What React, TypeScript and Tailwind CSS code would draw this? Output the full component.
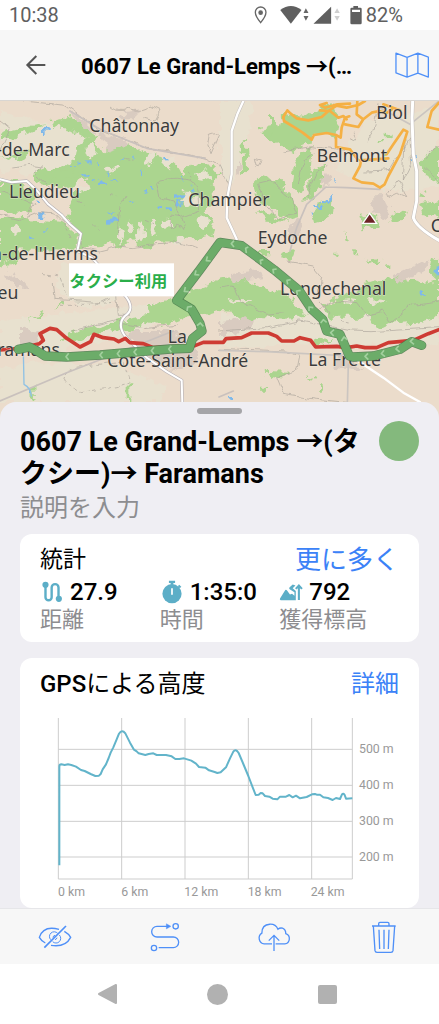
import React from "react";

const mapLabels: { text: string; x: number; y: number; anchor?: "start" | "end" }[] = [
  { text: "Châtonnay", x: 268, y: 92 },
  { text: "-de-Marc", x: 209, y: 166, anchor: "end" },
  { text: "Lieudieu", x: 27, y: 291 },
  { text: "Champier", x: 565, y: 314 },
  { text: "Biol", x: 1129, y: 53 },
  { text: "Belmont", x: 950, y: 184 },
  { text: "Eydoche", x: 773, y: 429 },
  { text: "n-de-l'Herms", x: 294, y: 476, anchor: "end" },
  { text: "C", x: 1292, y: 393 },
  { text: "eu", x: 55, y: 593, anchor: "end" },
  { text: "La", x: 503, y: 725 },
  { text: "ramans", x: 180, y: 764, anchor: "end" },
  { text: "Cote-Saint-André", x: 322, y: 799 },
  { text: "Longechenal", x: 840, y: 583 },
  { text: "La Frette", x: 925, y: 796 },
];

const forests = [
  "M0 95L60 80L118 66L130 76L70 100L30 112L0 118Z",
  "M90 218L180 200L225 170L232 130L262 108L310 150L345 120L385 125L425 150L480 165L520 200L560 218L562 185L640 192L660 215L632 245L645 290L620 330L645 380L640 405L590 412L540 420L475 422L430 440L395 408L365 440L330 420L300 442L235 438L242 395L200 350L222 300L215 270L272 268L262 235L190 262L90 238Z",
  "M0 350L110 356L185 362L238 402L228 440L130 450L0 446Z",
  "M0 238L62 246L110 275L100 320L60 332L0 330Z",
  "M155 60L215 48L262 82L300 112L280 122L230 92L160 78Z",
  "M100 212L160 214L240 210L238 228L140 234Z",
  "M0 170L60 160L90 145L80 168L30 180Z",
  "M850 38L925 50L960 20L1000 10L1020 60L1010 110L935 100L932 125L885 148L830 130L790 100L775 88L840 75Z",
  "M876 262L880 200L912 148L935 142L930 198L940 220L915 250L893 280Z",
  "M916 296L925 255L945 210L975 190L975 240L935 295Z",
  "M760 250L790 220L835 240L885 290L898 345L860 356L812 322L778 305Z",
  "M766 325L820 340L870 365L800 362Z",
  "M935 340L960 305L997 296L992 350L940 365Z",
  "M1265 180L1295 140L1317 128L1317 240L1275 222Z",
  "M1082 345L1107 332L1138 350L1132 382L1087 388Z",
  "M722 130L740 110L745 215L730 222Z",
  "M1170 345L1222 328L1215 350L1175 365Z",
  "M1260 310L1317 300L1317 348L1270 340Z",
  "M188 712L240 686L300 672L370 655L440 645L445 615L530 590L600 558L660 535L720 530L777 555L857 578L905 620L920 645L857 650L787 645L737 660L697 632L660 630L610 645L540 655L480 678L430 662L400 690L340 688L270 705L210 728Z",
  "M970 610L1030 580L1075 570L1087 550L1137 535L1197 530L1277 545L1317 535L1317 645L1257 665L1177 670L1147 685L1097 650L987 650Z",
  "M1300 460L1317 475L1317 540L1290 515Z",
  "M845 455L880 448L868 480L840 475Z",
  "M94 855L106 850L108 895L95 900Z",
  "M800 810L860 812L840 830L805 828Z",
  "M945 710L1000 715L970 735L940 728Z",
  "M0 430L70 440L50 480L0 500Z",
];

const fields = [
  "M0 30L110 60L220 80L280 130L230 260L110 240L60 200L0 210Z",
  "M0 660L180 640L330 620L460 610L520 660L300 720L120 760L0 740Z",
  "M0 800L150 780L330 790L500 850L480 906L0 906Z",
  "M1100 60L1230 40L1317 20L1317 260L1180 270L1050 230L1000 200Z",
  "M660 0L760 0L740 120L690 260L660 200Z",
  "M660 640L900 620L1100 650L1317 650L1317 730L1080 735L900 730L660 740Z",
  "M180 480L300 520L350 600L240 620L170 560Z",
];

const clearings = [
  [250, 268, 20, 10], [560, 290, 16, 26], [610, 225, 24, 14], [448, 172, 12, 18], [500, 368, 20, 12],
  [330, 205, 18, 8], [270, 150, 14, 22], [52, 384, 11, 11], [420, 395, 12, 30], [458, 385, 9, 26],
  [540, 418, 22, 10], [365, 404, 8, 20], [607, 365, 14, 22], [585, 300, 20, 12], [505, 178, 20, 14],
  [388, 372, 10, 22], [430, 640, 14, 6], [720, 600, 34, 6], [1050, 600, 20, 5], [1130, 600, 30, 5],
];

const towns = [
  "M210 30L240 45L290 95L370 115L390 130L330 150L300 100L245 78Z",
  "M1115 300L1145 270L1170 320L1160 352L1110 330Z",
  "M865 380L905 345L900 400L870 410Z",
  "M690 520L790 505L780 535L700 545Z",
  "M390 690L520 690L560 720L600 770L545 810L470 790L400 730Z",
  "M60 680L110 690L115 730L60 738Z",
  "M1010 760L1060 770L1090 810L1000 800Z",
  "M370 30L420 25L400 55L350 55Z",
  "M710 180L728 190L725 218L712 215Z",
  "M960 240L990 210L985 250L970 260Z",
  "M10 510L60 530L85 560L50 560Z",
  "M1190 520L1290 470L1280 500L1200 545Z",
  "M660 660L760 650L750 690L660 700Z",
];

const contours = [
  "M70 0L190 12L240 45L300 85L370 115L440 142L530 152L615 172L660 195",
  "M40 198L90 190L128 195L100 215L150 260L200 268",
  "M330 15Q350 35 385 25Q430 40 450 15L480 30L465 60L430 50",
  "M625 100Q650 90 655 100L630 158L620 130Z",
  "M470 245Q500 225 560 235Q600 240 595 330L540 350L520 300L480 290Z",
  "M515 345L545 350L555 385L530 370L510 380Z",
  "M0 340L60 355L115 332L160 335L200 375",
  "M0 275L60 290L105 310L80 345",
  "M240 400L245 440L300 450L360 435L400 440L470 428L540 425L590 440",
  "M350 410L360 310L375 285",
  "M660 190L690 255L690 290",
  "M850 150L935 137L1050 152",
  "M770 250L810 240L870 290L890 340L830 350L790 305Z",
  "M895 250L910 180L940 155",
  "M920 285L950 215L985 190",
  "M1137 10L1122 90L1100 125",
  "M1090 210L1140 208L1170 205L1230 110L1235 190L1210 240L1215 115",
  "M1165 280L1195 235L1220 290L1195 280L1170 292Z",
  "M1275 170L1317 130M1275 200L1317 240",
  "M160 540L165 595L240 600L300 605L330 590",
  "M350 585L355 640L390 640",
  "M220 690L350 655L360 670L430 680L480 675L530 670",
  "M660 560L700 555L720 600L800 640L850 635",
  "M657 690L800 680L900 660L1060 690L1110 692L1317 680",
  "M950 630L1010 600L1070 605L1100 645L1150 630L1170 665L1240 610L1317 600",
  "M657 742L860 750L900 760L890 810L830 830L850 880L950 895L1050 905",
  "M860 480L940 495L965 525L955 600L985 640",
  "M0 60L30 85L0 150",
  "M1050 110Q1080 130 1060 95",
  "M760 175L785 180L775 197L765 195Z",
];

const ponds = [
  [135, 75, 8, 18], [175, 130, 14, 8], [250, 220, 14, 7], [280, 235, 10, 6], [300, 238, 18, 8],
  [328, 215, 8, 10], [262, 175, 16, 6], [385, 296, 18, 7], [325, 328, 16, 8], [322, 350, 26, 12],
  [490, 168, 12, 7], [420, 212, 6, 14], [525, 280, 22, 12], [535, 300, 10, 16], [500, 322, 14, 8],
  [472, 315, 14, 6], [115, 338, 18, 7], [110, 300, 10, 6], [90, 412, 8, 10], [130, 378, 8, 6],
  [545, 225, 6, 14], [288, 190, 6, 5], [335, 240, 10, 5], [368, 170, 6, 6], [430, 270, 8, 5],
  [940, 312, 26, 6], [975, 300, 14, 6], [985, 280, 8, 22], [926, 332, 10, 6], [1003, 235, 5, 10],
  [1230, 172, 12, 5], [1262, 565, 10, 16], [1307, 500, 10, 20], [682, 885, 8, 10], [93, 870, 5, 8],
  [210, 195, 14, 5], [235, 182, 12, 5], [450, 258, 10, 5], [395, 168, 6, 5], [570, 260, 8, 8],
];

const taxiRoute =
  "M55 745L88 738L108 748L135 765L200 768L300 762L405 753L510 744L568 742L578 712L606 690L600 668L575 625L530 598L600 506L660 424L725 434L822 506L897 568L935 625L968 655L980 690L1020 700L1048 765L1060 768L1120 765L1200 745L1235 722L1265 733";

function MapView() {
  return (
    <svg
      viewBox="0 0 1317 954"
      preserveAspectRatio="xMidYMin slice"
      className="block h-full w-full"
      role="img"
      aria-label="Map"
    >
      <defs>
        <filter id="rough" x="-5%" y="-5%" width="110%" height="110%">
          <feTurbulence type="fractalNoise" baseFrequency="0.035" numOctaves="3" seed="4" result="n" />
          <feDisplacementMap in="SourceGraphic" in2="n" scale="38" xChannelSelector="R" yChannelSelector="G" />
        </filter>
        <filter id="wavy" x="-5%" y="-5%" width="110%" height="110%">
          <feTurbulence type="fractalNoise" baseFrequency="0.03" numOctaves="2" seed="9" result="n" />
          <feDisplacementMap in="SourceGraphic" in2="n" scale="22" xChannelSelector="R" yChannelSelector="G" />
        </filter>
      </defs>
      <rect width="1317" height="954" fill="#ebdccb" />
      <g filter="url(#rough)">
        {fields.map((d) => (
          <path key={d} d={d} fill="#e8e1cf" />
        ))}
        {forests.map((d) => (
          <path key={d} d={d} fill="#abd58f" />
        ))}
        {clearings.map(([x, y, rx, ry]) => (
          <ellipse key={`${x}-${y}`} cx={x} cy={y} rx={rx} ry={ry} fill="#e8e1cf" />
        ))}
        {towns.map((d) => (
          <path key={d} d={d} fill="#d9cbc0" />
        ))}
        {ponds.map(([x, y, w, h]) => (
          <rect key={`${x}-${y}`} x={x} y={y} width={w} height={h} fill="#7fb9ea" />
        ))}
        <path
          d="M1160 95h18v14h-18zM1130 120h22v10h-22zM1145 155h14v10h-14zM1000 455h16v8h-16zM1090 470l50 10l-10 12zM1160 490h14v14h-14zM920 820l24 12l-6 10zM960 850h8v22h-8zM780 860h24v12h-24zM810 45h12v50h-12zM1060 440l14 20h-14zM80 660l50 -28l-6 12zM383 850h8v50h-8zM780 450h30v10h-30zM160 625l30-20v10zM1265 270l12 20h-16zM1030 390l20 40h-8z"
          fill="#abd58f"
        />
      </g>
      <g filter="url(#wavy)" fill="none" stroke="#aca59b" strokeWidth="2">
        {contours.map((d) => (
          <path key={d} d={d} />
        ))}
        <path
          d="M190 840Q200 800 220 800L370 780L390 850L240 875ZM230 300l20 10m30 60l15 20m35-110l20 8m85 70l24 10m-260 10l14 30m350-200l10 24m-200-60l24 6m620 480l40 10M180 610h90l70-6M120 520l60 8l20 60"
          strokeDasharray="12 9"
        />
      </g>

      <g fill="none" strokeLinejoin="round" strokeLinecap="round">
        <path d="M657 888L700 870M0 900L200 815L420 730L520 690M210 30L300 85L440 142L615 172M978 258L1040 260L1140 265M978 258L920 310L890 380L870 450" stroke="#c9c1bd" strokeWidth="5" />
        <path d="M657 748L800 752L1050 765M1045 790L1042 906M1140 20L1230 70L1317 0" stroke="#cbc5c0" strokeWidth="5" />
        <path d="M70 750L72 850Q92 860 94 885" stroke="#8fc1e4" strokeWidth="4" />
        <path d="M0 235L35 244L80 240L110 268L145 310L185 342L210 370L243 398L232 450L275 470L330 530L380 590Q405 625 375 645Q350 670 375 705L440 770L500 812L545 838L547 906" stroke="#b9b3b5" strokeWidth="10" />
        <path d="M0 235L35 244L80 240L110 268L145 310L185 342L210 370L243 398L232 450L275 470L330 530L380 590Q405 625 375 645Q350 670 375 705L440 770L500 812L545 838L547 906" stroke="#fff" strokeWidth="6" />
        <path d="M730 0L712 40L695 90L695 220L682 290L680 350L710 415" stroke="#c2bdba" strokeWidth="10" />
        <path d="M730 0L712 40L695 90L695 220L682 290L680 350L710 415M1060 770L1150 830L1210 875L1260 903" stroke="#fff" strokeWidth="7" />
        <path d="M1238 0L1236 50L1240 160L1250 210L1250 300L1240 350Q1250 380 1317 418" stroke="#c2bdba" strokeWidth="12" />
        <path d="M1238 0L1236 50L1240 160L1250 210L1250 300L1240 350Q1250 380 1317 418" stroke="#fff" strokeWidth="9" />
        <g stroke="#f5b044" strokeWidth="8">
          <path d="M850 48L862 28L872 38L890 52L925 58L965 48L985 30L1010 14L1040 20L1075 12L1095 0" />
          <path d="M850 48L852 60L885 80L908 95L935 116L942 102L980 96L1008 102L1022 110L1025 80L1035 50L1048 46" />
          <path d="M960 28L990 30L1015 50L1030 45L1040 55M1072 0L1070 40L1090 55L1075 78L1035 70M1090 55L1115 35L1137 30L1160 36L1175 25" />
          <path d="M980 6L960 12L975 20L1012 10L1050 8M1008 110L1008 138L1050 145L1072 175M1082 185L1080 195L1060 232L1085 244L1120 248L1140 260L1154 250L1165 225L1200 160L1222 92L1210 86L1180 130L1160 160" />
          <path d="M1150 10L1200 28M1317 5L1295 30L1282 78L1317 86M1080 178L1165 172" />
        </g>
        <path
          d="M0 747L60 742L118 728L130 718L120 698L150 682L170 686L200 712L240 738L272 722L282 700L310 710L342 714L356 722L376 712L390 725L430 728L460 740L585 734L610 724L670 724L678 713L725 710L755 696L805 696L830 706L845 720L882 720L900 710L932 718L947 738L1010 736L1040 740L1070 735L1095 740L1130 740L1165 725L1240 718L1285 698L1317 686"
          stroke="#ce3b33"
          strokeWidth="11"
        />
      </g>

      <path d="M1088 367L1109 337L1130 367Z" fill="#6b2426" stroke="#fff" strokeWidth="4" />

      <g
        className="[font-family:'Noto_Sans',sans-serif]"
        fontSize="53"
        fill="#3b3b3b"
        stroke="#f2ebdf"
        strokeWidth="3"
        strokeOpacity="0.7"
        paintOrder="stroke"
      >
        {mapLabels.map((l) => (
          <text key={l.text} x={l.x} y={l.y} textAnchor={l.anchor ?? "start"}>
            {l.text}
          </text>
        ))}
      </g>

      <g fill="none" strokeLinejoin="round" strokeLinecap="round">
        <path d={taxiRoute} stroke="#47794a" strokeOpacity="0.85" strokeWidth="28" />
        <path d={taxiRoute} stroke="#6cac69" strokeWidth="24" />
        <g stroke="#a3d09e" strokeWidth="5" strokeLinecap="butt">
          <path d="M206 757l-8 10l8 10M308 752l-8 10l8 10M360 748l-8 10l8 10M410 743l-8 10l8 10M462 739l-8 10l8 10M514 734l-8 10l8 10" />
          <path d="M610 676l-9-10l-10 8M576 616l-13 2l-2 12M556 558l-3 13l13 1M588 508l-3 13l13 1M622 466l-3 13l13 1M702 419l-8 9l8 10" />
          <path d="M745 438l-8 4l2 14M790 476l-9 2l2 12M830 504l-11 2l2 12M872 536l-11 2l2 12M902 568l-12 2l2 12M940 620l-13-2l0 12M980 664l-10-8l-8 10M1002 686l-10 9l9 10M1042 716l-10-8l-8 12M1104 757l-9 9l10 10M1152 748l-8 10l11 9M1196 734l-8 10l11 9M1240 712l-9 9l11 9" />
        </g>
      </g>

      <rect x="207" y="487" width="315" height="99" fill="#fff" />
      <text
        x="208"
        y="558"
        fontSize="49"
        fill="#2aae4a"
        className="font-bold [font-family:'Noto_Sans_CJK_JP',sans-serif]"
      >
        タクシー利用
      </text>
    </svg>
  );
}

function ElevationChart() {
  return (
    <svg viewBox="120 180 1077 570" className="block w-full" role="img" aria-label="GPSによる高度">
      <g stroke="#cdcdcd" strokeWidth="3" fill="none">
        <path d="M175 204V687M365 204V687M555 204V687M745 204V687M935 204V687M1057 204V687" />
        <path d="M175 298H1057M175 406H1057M175 514H1057M175 621H1057M175 687H1057" />
      </g>
      <path
        d="M178 646V350Q178 343 184 343L194 345L204 343L214 345L228 350L243 360L254 363L272 372L286 378L297 377L302 372L308 358L318 343L326 324L332 308L340 292L350 268L357 251Q366 237 376 250L390 278L402 299L410 304L416 310L436 315L446 312L460 310L470 315L498 315L515 319L526 327L538 327L552 325L574 332L588 341L597 351L616 353L627 361L644 366L652 369L662 367L678 352L690 325L700 305Q707 295 716 309L730 342L745 378L758 412L767 435L776 434L782 429L788 430L795 438L808 440L818 446L832 448L840 440L858 440L868 435L878 442L888 437L900 445L920 441L936 433L945 432L950 434L960 434L970 442L984 444L998 450L1008 444L1020 447L1026 433Q1030 428 1034 435L1038 446L1057 445"
        fill="none"
        stroke="#62b4ca"
        strokeWidth="6"
        strokeLinejoin="round"
      />
      <g fontSize="37" fill="#999" className="[font-family:Roboto,sans-serif]">
        <text x="1077" y="309">500 m</text>
        <text x="1077" y="417">400 m</text>
        <text x="1077" y="524">300 m</text>
        <text x="1077" y="632">200 m</text>
        <text x="174" y="738">0 km</text>
        <text x="364" y="738">6 km</text>
        <text x="553" y="738">12 km</text>
        <text x="743" y="738">18 km</text>
        <text x="932" y="738">24 km</text>
      </g>
    </svg>
  );
}

const stats = [
  {
    value: "27.9",
    label: "距離",
    icon: (
      <svg viewBox="124 150 66 70" className="h-6 w-6 shrink-0">
        <path d="M138 166V200A9 9 0 0 0 156 200V172A10 10 0 0 1 176 172V204" fill="none" stroke="#5caec7" strokeWidth="7" />
        <circle cx="138" cy="164" r="9" fill="#5caec7" />
        <circle cx="177" cy="205" r="9" fill="#5caec7" />
      </svg>
    ),
  },
  {
    value: "1:35:0",
    label: "時間",
    icon: (
      <svg viewBox="485 148 66 70" className="h-6 w-6 shrink-0">
        <circle cx="518" cy="188" r="28" fill="#5caec7" />
        <path d="M509 150h18v7h-18zM514 156h8v6h-8z" fill="#5caec7" />
        <path d="M537 164l6 6" stroke="#5caec7" strokeWidth="6" />
        <path d="M518 174v15" stroke="#fff" strokeWidth="5" strokeLinecap="round" />
      </svg>
    ),
  },
  {
    value: "792",
    label: "獲得標高",
    icon: (
      <svg viewBox="845 150 68 70" className="h-6 w-6 shrink-0">
        <path
          d="M849 209Q845 208 847 204L861 181Q864 176 868 181L876 192L882 190L889 196V186L875 177Q872 174 875 171L884 163L892 166L884 174L893 182V209Z"
          fill="#5caec7"
        />
        <path d="M902 208V168M893 176l9-10l9 10" fill="none" stroke="#5caec7" strokeWidth="6" />
      </svg>
    ),
  },
];

export default function App() {
  return (
    <div className="flex min-h-screen flex-col bg-white text-black [font-family:Roboto,'Noto_Sans_CJK_JP',sans-serif]">
      <div className="flex h-[30px] items-center justify-between pr-9 pl-[9px] text-xl leading-[30px] text-[#606060]">
        <span>10:38</span>
        <div className="flex items-center">
          <svg viewBox="750 15 340 60" className="h-5 w-[113px]" aria-hidden="true">
            <path d="M773 68Q757 49 757 37A16 16 0 0 1 789 37Q789 49 773 68Z" fill="none" stroke="#666" strokeWidth="4" />
            <circle cx="773" cy="38" r="7" fill="#666" />
            <path d="M832 30Q864 6 896 30L864 71Z" fill="#5f5f5f" />
            <path d="M902 39L909 25L917 39ZM902 48L909 62L917 48Z" fill="#666" />
            <path d="M932 71L985 20V71Z" fill="#5f5f5f" />
            <path d="M995 39L1003 25L1011 39ZM995 48L1003 62L1011 48Z" fill="#cfcfcf" />
            <path d="M1052 18h14v5h7q4 0 4 4v42q0 4-4 4h-26q-4 0-4-4V27q0-4 4-4h5zM1048 29v7h24v-7z" fill="#5f5f5f" fillRule="evenodd" />
          </svg>
          <span>82%</span>
        </div>
      </div>

      <header className="flex h-[70px] items-center bg-[#f7f7f7] pr-[9px] pl-[25px]">
        <button type="button" aria-label="戻る" className="shrink-0">
          <svg viewBox="74 163 66 66" className="h-[22px] w-[22px]">
            <path d="M135 196H82M108 169L81 196L108 223" fill="none" stroke="#555" strokeWidth="6" />
          </svg>
        </button>
        <h1 className="ml-[34px] min-w-0 flex-1 truncate pt-1 text-[22px] leading-8 font-bold">
          0607 Le Grand-Lemps →(…
        </h1>
        <button type="button" aria-label="地図" className="ml-4 shrink-0">
          <svg viewBox="1181 151 110 90" className="h-[30px] w-9">
            <path
              d="M1187 160L1221 173L1254 160L1286 172V233L1254 221L1221 233L1187 220ZM1221 173V233M1254 160V221"
              fill="none"
              stroke="#4f90f8"
              strokeWidth="4"
              strokeLinejoin="round"
            />
          </svg>
        </button>
      </header>

      <section className="h-[318px] overflow-hidden border-t border-[#d9d6d2]">
        <MapView />
      </section>

      <main className="relative -mt-4 flex-1 rounded-t-2xl bg-[#efeef3] px-5 pt-[6px]">
        <div className="mx-auto h-[6px] w-[45px] rounded-full bg-[#a5a5a8]" />
        <div className="mt-3 flex items-start justify-between gap-3">
          <h2 className="min-w-0 flex-1 text-[27px] leading-8 font-bold">0607 Le Grand-Lemps →(タクシー)→ Faramans</h2>
          <button type="button" aria-label="色" className="mt-[-5px] h-10 w-10 shrink-0 rounded-full bg-[#84b97d]" />
        </div>
        <input
          type="text"
          aria-label="説明"
          placeholder="説明を入力"
          className="block h-9 w-full bg-transparent text-2xl outline-none placeholder:text-[#8d8d90]"
        />

        <section className="mt-2 rounded-xl bg-white px-5 pt-2 pb-2">
          <div className="flex items-center justify-between">
            <h3 className="text-[23px] leading-9">統計</h3>
            <a href="#stats" className="text-[26px] leading-9 text-[#3b82f7]">更に多く</a>
          </div>
          <div className="grid grid-cols-3">
            {stats.map((s) => (
              <div key={s.label}>
                <div className="flex items-center gap-[6px] text-2xl leading-7 font-medium">
                  {s.icon}
                  <span>{s.value}</span>
                </div>
                <div className="text-[22px] leading-7 text-[#8d8d90]">{s.label}</div>
              </div>
            ))}
          </div>
        </section>

        <section className="mt-4 rounded-xl bg-white px-5 pt-2 pb-2">
          <div className="mb-2 flex items-center justify-between text-2xl leading-9">
            <h3>
              <span className="font-medium">GPS</span>による高度
            </h3>
            <a href="#elevation" className="text-[#3b82f7]">詳細</a>
          </div>
          <ElevationChart />
        </section>
      </main>

      <div className="grid h-14 grid-cols-4 border-t border-[#e6e6e9] bg-[#f7f7f7]">
        <button type="button" aria-label="非表示" className="flex items-center justify-center">
          <svg viewBox="108 60 114 96" className="h-8 w-[38px]" fill="none" stroke="#4f90f8" strokeWidth="4">
            <path d="M133 140L198 75" strokeWidth="5" />
            <path d="M177 85Q130 72 118 109Q124 120 136 126M193 91Q207 99 212 109Q196 140 153 133" />
            <path d="M173 97A14 14 0 0 0 152 116M178 102A14 14 0 0 1 158 122M165 103Q159 104 159 110M171 110Q170 115 165 116" strokeWidth="3" />
          </svg>
        </button>
        <button type="button" aria-label="ルート" className="flex items-center justify-center">
          <svg viewBox="446 60 96 96" className="h-8 w-8" fill="none" stroke="#4f90f8" strokeWidth="4">
            <path d="M500 76H470A16 16 0 0 0 470 108H519A16 16 0 0 1 519 140H475" />
            <path d="M498 68L512 76L498 84Z" fill="#4f90f8" strokeWidth="1" />
            <circle cx="526" cy="76" r="8" />
            <circle cx="461" cy="141" r="8" />
          </svg>
        </button>
        <button type="button" aria-label="アップロード" className="flex items-center justify-center">
          <svg viewBox="769 60 110 96" className="h-8 w-9" fill="none" stroke="#4f90f8" strokeWidth="4">
            <path d="M818 129H794A18 18 0 0 1 787 96Q787 70 811 69Q829 68 836 84Q842 79 850 81Q860 85 860 98A16 16 0 0 1 857 129H829" />
            <path d="M824 151V104M808 119L824 103L840 119" />
          </svg>
        </button>
        <button type="button" aria-label="削除" className="flex items-center justify-center">
          <svg viewBox="1103 60 96 96" className="h-8 w-8" fill="none" stroke="#4f90f8" strokeWidth="4">
            <path d="M1115 75H1186M1135 75V68Q1135 64 1139 64H1162Q1166 64 1166 68V75" />
            <path d="M1119 75L1124 149Q1125 154 1130 154H1172Q1177 154 1178 149L1183 75M1136 86L1138 144M1151 86V144M1166 86L1164 144" />
          </svg>
        </button>
      </div>

      <nav className="flex h-[60px] items-center justify-center bg-white pr-1">
        <button type="button" aria-label="戻る" className="flex w-[110px] justify-center">
          <svg viewBox="0 0 24 24" className="h-6 w-6">
            <path d="M3 12L20 3V21Z" fill="#b1b1b1" stroke="#b1b1b1" strokeWidth="2" strokeLinejoin="round" />
          </svg>
        </button>
        <button type="button" aria-label="ホーム" className="flex w-[110px] justify-center">
          <span className="h-[21px] w-[21px] rounded-full bg-[#b1b1b1]" />
        </button>
        <button type="button" aria-label="履歴" className="flex w-[110px] justify-center">
          <span className="h-[19px] w-[19px] rounded-xs bg-[#b1b1b1]" />
        </button>
      </nav>
    </div>
  );
}
